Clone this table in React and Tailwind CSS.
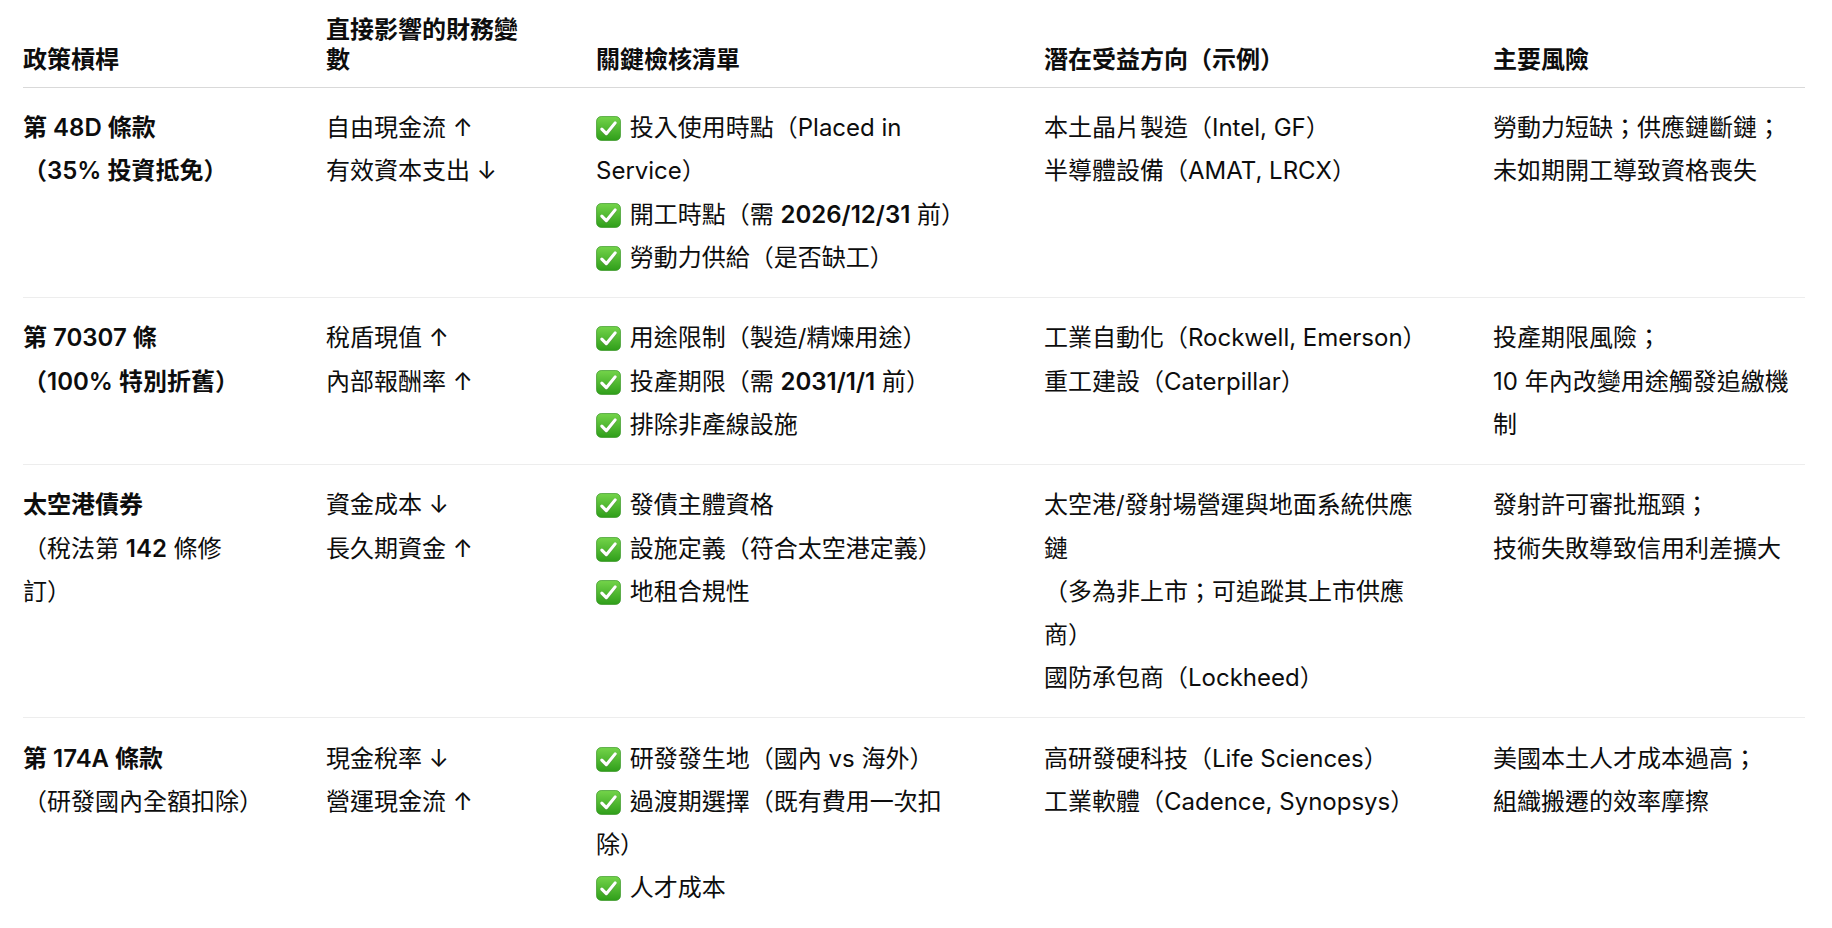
import React from "react";

const Check = () => (
  <svg viewBox="0 0 24 24" className="inline-block w-[25px] h-[25px] align-[-5px] mr-[2px]">
    <defs>
      <linearGradient id="ckg" x1="0" y1="0" x2="0" y2="1">
        <stop offset="0" stopColor="#74d44a" />
        <stop offset="1" stopColor="#2f9e1a" />
      </linearGradient>
    </defs>
    <rect x="0.5" y="0.5" width="23" height="23" rx="4.5" fill="url(#ckg)" stroke="#2c8f18" strokeWidth="0.6" />
    <path d="M5.6 12.6 L9.9 17 L18.4 6.6" fill="none" stroke="#6b6b6b" strokeOpacity="0.35" strokeWidth="3.4" strokeLinecap="round" strokeLinejoin="round" transform="translate(0 0.6)" />
    <path d="M5.6 12.6 L9.9 17 L18.4 6.6" fill="none" stroke="#ffffff" strokeWidth="3" strokeLinecap="round" strokeLinejoin="round" />
  </svg>
);

const B = ({ children }) => <span className="font-semibold">{children}</span>;

const rows = [
  {
    c1: [
      <B>第 48D 條款</B>,
      <B>（35% 投資抵免）</B>,
    ],
    c2: ["自由現金流 ↑", "有效資本支出 ↓"],
    c3: [
      <>
        <Check /> 投入使用時點（Placed in
        <br />
        Service）
      </>,
      <>
        <Check /> 開工時點（需 <B>2026/12/31</B> 前）
      </>,
      <>
        <Check /> 勞動力供給（是否缺工）
      </>,
    ],
    c4: ["本土晶片製造（Intel, GF）", "半導體設備（AMAT, LRCX）"],
    c5: ["勞動力短缺；供應鏈斷鏈；", "未如期開工導致資格喪失"],
  },
  {
    c1: [<B>第 70307 條</B>, <B>（100% 特別折舊）</B>],
    c2: ["稅盾現值 ↑", "內部報酬率 ↑"],
    c3: [
      <>
        <Check /> 用途限制（製造/精煉用途）
      </>,
      <>
        <Check /> 投產期限（需 <B>2031/1/1</B> 前）
      </>,
      <>
        <Check /> 排除非產線設施
      </>,
    ],
    c4: ["工業自動化（Rockwell, Emerson）", "重工建設（Caterpillar）"],
    c5: [
      "投產期限風險；",
      <>
        10 年內改變用途觸發追繳機
        <br />制
      </>,
    ],
  },
  {
    c1: [
      <B>太空港債券</B>,
      <>
        （稅法第 <B>142</B> 條修
        <br />
        訂）
      </>,
    ],
    c2: ["資金成本 ↓", "長久期資金 ↑"],
    c3: [
      <>
        <Check /> 發債主體資格
      </>,
      <>
        <Check /> 設施定義（符合太空港定義）
      </>,
      <>
        <Check /> 地租合規性
      </>,
    ],
    c4: [
      <>
        太空港/發射場營運與地面系統供應
        <br />
        鏈
      </>,
      <>
        （多為非上市；可追蹤其上市供應
        <br />
        商）
      </>,
      "國防承包商（Lockheed）",
    ],
    c5: ["發射許可審批瓶頸；", "技術失敗導致信用利差擴大"],
  },
  {
    c1: [<B>第 174A 條款</B>, "（研發國內全額扣除）"],
    c2: ["現金稅率 ↓", "營運現金流 ↑"],
    c3: [
      <>
        <Check /> 研發發生地（國內 vs 海外）
      </>,
      <>
        <Check /> 過渡期選擇（既有費用一次扣
        <br />
        除）
      </>,
      <>
        <Check /> 人才成本
      </>,
    ],
    c4: ["高研發硬科技（Life Sciences）", "工業軟體（Cadence, Synopsys）"],
    c5: ["美國本土人才成本過高；", "組織搬遷的效率摩擦"],
  },
];

const Cell = ({ lines }) => (
  <td className="align-top py-[18.25px] whitespace-nowrap">
    {lines.map((l, i) => (
      <div key={i}>{l}</div>
    ))}
  </td>
);

export default function App() {
  return (
    <div
      className="min-h-screen bg-white pl-[23px] text-[#0d0d0d] text-[24px]"
      style={{ fontFamily: '"Inter", "Noto Sans CJK TC", "Noto Sans", sans-serif' }}
    >
      <table className="table-fixed border-collapse w-[1782px] text-left">
        <thead>
          <tr className="border-b border-[#d9d9d9]">
            <th className="w-[303px] align-bottom pt-[15px] pb-[12px] font-semibold leading-[30px]">政策槓桿</th>
            <th className="w-[270px] align-bottom pt-[15px] pb-[12px] font-semibold leading-[30px]">
              直接影響的財務變
              <br />數
            </th>
            <th className="w-[448px] align-bottom pt-[15px] pb-[12px] font-semibold leading-[30px]">關鍵檢核清單</th>
            <th className="w-[449px] align-bottom pt-[15px] pb-[12px] font-semibold leading-[30px]">潛在受益方向（示例）</th>
            <th className="w-[312px] align-bottom pt-[15px] pb-[12px] font-semibold leading-[30px]">主要風險</th>
          </tr>
        </thead>
        <tbody className="leading-[43.15px]">
          {rows.map((r, i) => (
            <tr key={i} className={i < rows.length - 1 ? "border-b border-[#ededed]" : ""}>
              <Cell lines={r.c1} />
              <Cell lines={r.c2} />
              <Cell lines={r.c3} />
              <Cell lines={r.c4} />
              <Cell lines={r.c5} />
            </tr>
          ))}
        </tbody>
      </table>
    </div>
  );
}
